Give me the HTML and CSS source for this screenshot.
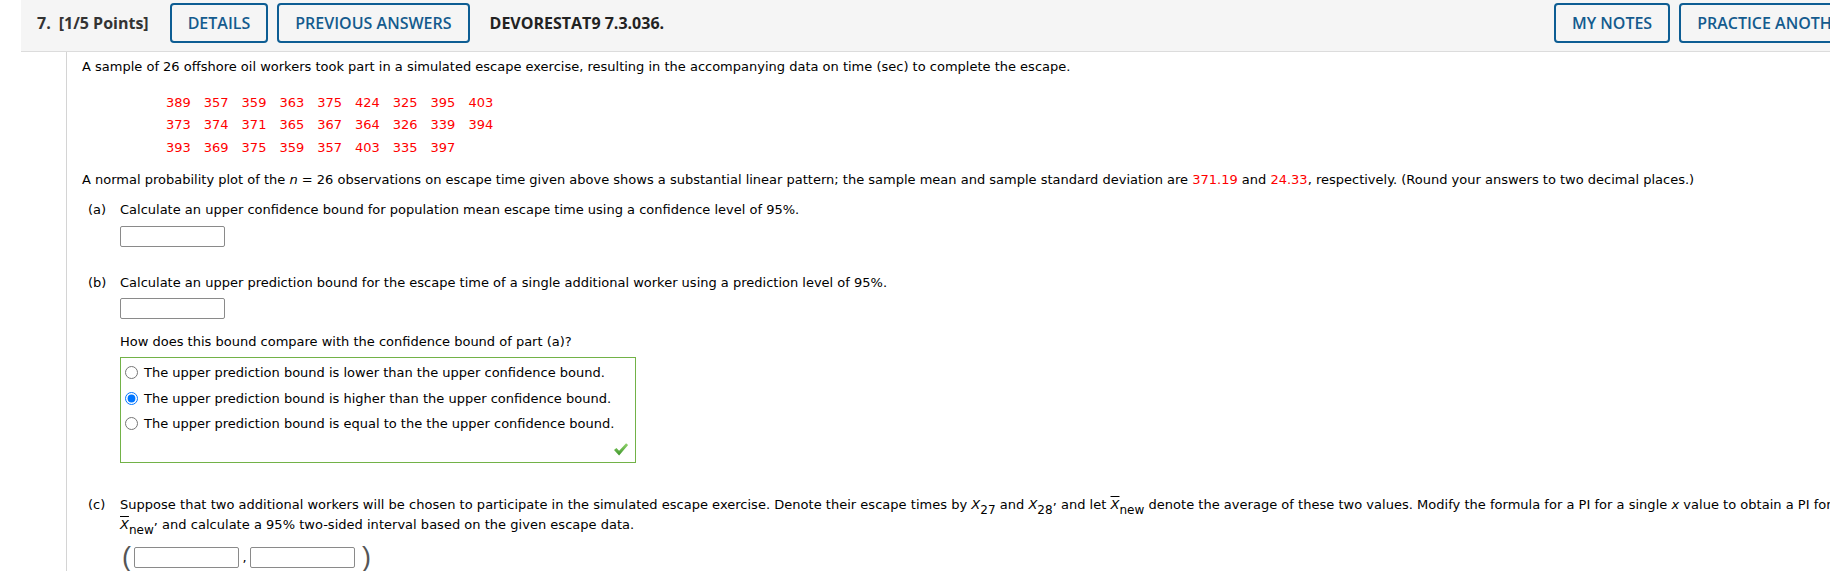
FILE: index.html
```html
<!DOCTYPE html>
<html>

<head lang="en">
    <meta charset="UTF-8">
    <title>DEVORESTAT9 7.3.036.</title>
    <link rel="stylesheet" href="styles.css">
</head>

<body>

    <div class="question">
        <!--题目标题栏-->
        <div class="q-header">
            <span class="q-num">7.</span>
            <span class="q-points">[1/5 Points]</span>
            <a href="javascript:;" class="q-btn">DETAILS</a>
            <a href="javascript:;" class="q-btn">PREVIOUS ANSWERS</a>
            <span class="q-title">DEVORESTAT9 7.3.036.</span>
            <div class="q-tools">
                <a href="javascript:;" class="q-btn">MY NOTES</a>
                <a href="javascript:;" class="q-btn">PRACTICE ANOTHER</a>
            </div>
        </div>

        <!--题目内容-->
        <div class="q-body">
            <p class="intro">A sample of 26 offshore oil workers took part in a simulated escape exercise, resulting in the accompanying data on time (sec) to complete the escape.</p>

            <div class="data">
                <span>389</span><span>357</span><span>359</span><span>363</span><span>375</span><span>424</span><span>325</span><span>395</span><span>403</span>
                <span>373</span><span>374</span><span>371</span><span>365</span><span>367</span><span>364</span><span>326</span><span>339</span><span>394</span>
                <span>393</span><span>369</span><span>375</span><span>359</span><span>357</span><span>403</span><span>335</span><span>397</span>
            </div>

            <p class="stem">A normal probability plot of the <i>n</i> = 26 observations on escape time given above shows a substantial linear pattern; the sample mean and sample standard deviation are <span class="red">371.19</span> and <span class="red">24.33</span>, respectively. (Round your answers to two decimal places.)</p>

            <!--(a)-->
            <div class="part part-a">
                <span class="part-label">(a)</span>
                <div class="part-body">
                    <p>Calculate an upper confidence bound for population mean escape time using a confidence level of 95%.</p>
                    <input class="answer" type="text">
                </div>
            </div>

            <!--(b)-->
            <div class="part part-b">
                <span class="part-label">(b)</span>
                <div class="part-body">
                    <p>Calculate an upper prediction bound for the escape time of a single additional worker using a prediction level of 95%.</p>
                    <input class="answer" type="text">
                    <p class="how">How does this bound compare with the confidence bound of part (a)?</p>
                    <div class="choices">
                        <label class="choice"><input type="radio" name="cmp">The upper prediction bound is lower than the upper confidence bound.</label>
                        <label class="choice"><input type="radio" name="cmp" checked>The upper prediction bound is higher than the upper confidence bound.</label>
                        <label class="choice"><input type="radio" name="cmp">The upper prediction bound is equal to the the upper confidence bound.</label>
                        <div class="mark">
                            <svg width="16" height="15" viewBox="0 0 16 15">
                                <defs>
                                    <linearGradient id="g" x1="0" y1="0" x2="0" y2="1">
                                        <stop offset="0" stop-color="#93d46e" />
                                        <stop offset="1" stop-color="#3d962a" />
                                    </linearGradient>
                                </defs>
                                <path d="M1 8 L3.4 5.9 L6.1 8.8 L13.1 1.2 L15.1 3.1 L6.1 13.4 Z" fill="url(#g)" />
                            </svg>
                        </div>
                    </div>
                </div>
            </div>

            <!--(c)-->
            <div class="part part-c">
                <span class="part-label">(c)</span>
                <div class="part-body">
                    <p class="c-text">Suppose that two additional workers will be chosen to participate in the simulated escape exercise. Denote their escape times by <i>X</i><sub>27</sub> and <i>X</i><sub>28</sub><span class="up">,</span> and let <i class="xbar">X</i><sub>new</sub> denote the average of these two values. Modify the formula for a PI for a single <i>x</i> value to obtain a PI for<br><i class="xbar">X</i><sub>new</sub><span class="up">,</span> and calculate a 95% two-sided interval based on the given escape data.</p>
                    <div class="interval">
                        <span class="paren">(</span>
                        <input class="answer" type="text">
                        <span class="comma">,</span>
                        <input class="answer" type="text">
                        <span class="paren">)</span>
                    </div>
                </div>
            </div>
        </div>
    </div>

</body>

</html>
```

FILE: styles.css
```css
* {
    padding: 0;
    margin: 0;
    box-sizing: border-box;
}

html,
body {
    overflow: hidden;
}

body {
    font: 13px "DejaVu Sans", Verdana, sans-serif;
    color: #000;
    background-color: #fff;
}

.question {
    width: 1860px;
    margin-left: 21px;
}

/* 标题栏 */
.q-header {
    display: flex;
    align-items: center;
    height: 52px;
    padding: 0 12px 6px 16px;
    background-color: #f5f5f5;
    border-bottom: 1px solid #dcdcdc;
    font: 16px "Open Sans", sans-serif;
}

.q-num,
.q-points {
    font-weight: bold;
    color: #333;
}

.q-num {
    margin-right: 8px;
}

.q-points {
    margin-right: 21px;
}

.q-btn {
    display: inline-flex;
    align-items: center;
    height: 40px;
    padding: 0 16px;
    border: 2px solid #0d5d93;
    border-radius: 4px;
    color: #145b8e;
    font-weight: 600;
    text-decoration: none;
    margin-right: 9px;
}

.q-title {
    margin-left: 11px;
    font-weight: bold;
    color: #222;
}

.q-tools {
    margin-left: auto;
    display: flex;
}

.q-tools .q-btn {
    margin-right: 0;
    margin-left: 9px;
}

/* 内容 */
.q-body {
    margin-left: 45px;
    border-left: 1px solid #d4d4d4;
    padding: 6px 0 40px 15px;
}

.intro,
.stem {
    line-height: 18px;
}

.data {
    display: grid;
    grid-template-columns: repeat(9, 37.8px);
    grid-auto-rows: 22.5px;
    align-items: center;
    margin: 15px 0 0 84px;
    color: #f00;
}

.stem {
    margin-top: 12.5px;
}

.red {
    color: #f00;
}

.part {
    display: flex;
    margin-left: 6px;
}

.part-label {
    flex: none;
    width: 32px;
    line-height: 18px;
}

.part-body p {
    line-height: 18px;
}

.part-a {
    margin-top: 12px;
}

.part-b {
    margin-top: 27px;
}

.part-c {
    margin-top: 32px;
}

.part-c .part-label {
    line-height: 20.5px;
}

.answer {
    display: block;
    width: 105px;
    height: 21px;
    margin-top: 6.5px;
    border: 1px solid #8a8a8a;
    border-radius: 2px;
    background: #fff;
}

.part-b .how {
    margin-top: 14px;
}

.choices {
    width: 516px;
    margin-top: 6px;
    padding-top: 2px;
    border: 1px solid #72b247;
}

.choice {
    display: flex;
    align-items: center;
    height: 25.6px;
}

.choice input {
    width: 13px;
    height: 13px;
    margin: 0 6px 0 4px;
}

.mark {
    display: flex;
    justify-content: flex-end;
    align-items: center;
    height: 25px;
    padding-right: 6px;
}

.part-c .c-text {
    line-height: 20.5px;
    letter-spacing: 0.02px;
}

sub {
    font-size: 12px;
    line-height: 0;
    vertical-align: -5px;
}

.up {
    vertical-align: 4px;
    line-height: 0;
}

.xbar {
    text-decoration: overline;
}

.interval {
    display: flex;
    align-items: center;
    margin-top: 11px;
    height: 21px;
}

.interval .answer {
    margin-top: 0;
}

.paren {
    font: 27px "Liberation Sans", sans-serif;
    color: #555;
    line-height: 21px;
}

.paren:first-child {
    margin: 0 3px 0 2px;
}

.paren:last-child {
    margin-left: 7px;
}

.comma {
    width: 11px;
    text-align: center;
}
```
